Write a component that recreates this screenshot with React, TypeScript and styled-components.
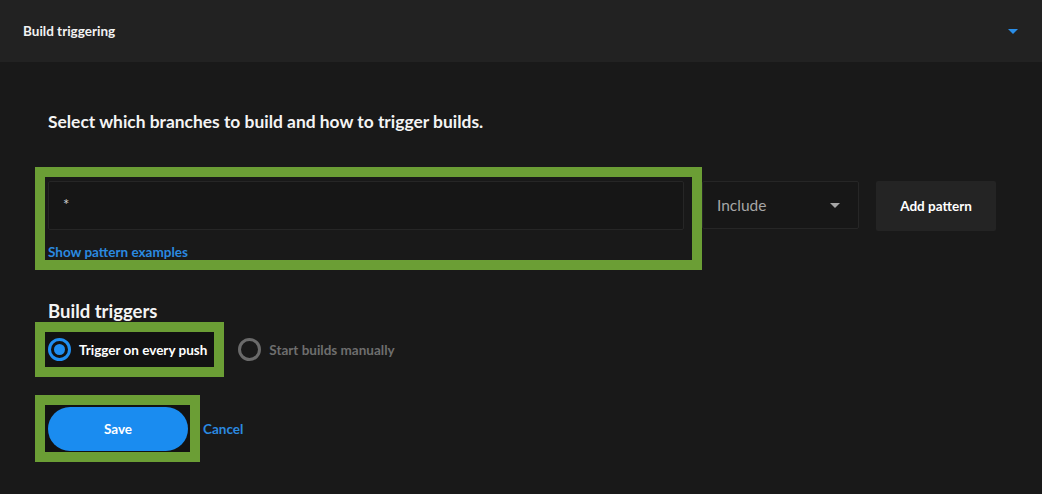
import React from "react";
import styled, { createGlobalStyle } from "styled-components";

const Global = createGlobalStyle`
  html, body { margin: 0; padding: 0; background: #191919; }
  body { font-family: Lato, "Open Sans", Arial, sans-serif; color: #fff; }
  * { box-sizing: border-box; }
`;

const Page = styled.div`
  width: 1042px;
  height: 494px;
  background: #191919;
  overflow: hidden;
`;

const Header = styled.header`
  height: 62px;
  background: #222222;
  display: flex;
  align-items: center;
  justify-content: space-between;
  padding: 0 24px 0 23px;
`;

const HeaderTitle = styled.h2`
  margin: 0;
  font-size: 13.5px;
  font-weight: 700;
  color: #f2f2f2;
`;

const Content = styled.main`
  padding: 50px 0 0 48px;
  display: flex;
  flex-direction: column;
  align-items: flex-start;
`;

const Lead = styled.p`
  margin: 0;
  font-size: 17.4px;
  line-height: 20px;
  font-weight: 700;
  color: #f4f4f4;
`;

const Highlight = styled.div`
  outline: 10px solid #6b9e35;
  margin-left: -3px;
`;

const PatternRow = styled.div`
  display: flex;
  align-items: flex-start;
  margin-top: 45px;
`;

const PatternGroup = styled(Highlight)`
  width: 647px;
  padding: 4px 8px 0 3px;
  display: flex;
  flex-direction: column;
  align-items: flex-start;
`;

const PatternInput = styled.div`
  width: 636px;
  height: 49px;
  background: #161616;
  border: 1px solid #262626;
  border-radius: 2px;
  display: flex;
  align-items: center;
  padding: 0 0 4px 14px;
  font-size: 15px;
  color: #cfcfcf;
`;

const LinkText = styled.a`
  color: #2b8ae0;
  font-size: 13.5px;
  font-weight: 700;
  text-decoration: none;
  cursor: pointer;
`;

const ExamplesLink = styled(LinkText)`
  margin-top: 14px;
  line-height: 16px;
`;

const Select = styled.div`
  margin: 4px 0 0 10px;
  width: 157px;
  height: 48px;
  background: #171717;
  border: 1px solid #262626;
  border-radius: 2px;
  display: flex;
  align-items: center;
  justify-content: space-between;
  padding: 0 18px 0 14px;
  font-size: 15.5px;
  color: #a6a6a6;
`;

const Caret = styled.span<{ $color: string; $w: number; $h: number }>`
  width: 0;
  height: 0;
  border-left: ${(p) => p.$w / 2}px solid transparent;
  border-right: ${(p) => p.$w / 2}px solid transparent;
  border-top: ${(p) => p.$h}px solid ${(p) => p.$color};
`;

const AddButton = styled.button`
  margin: 4px 0 0 17px;
  width: 120px;
  height: 50px;
  background: #242424;
  border: none;
  border-radius: 2px;
  color: #fff;
  font-family: inherit;
  font-size: 13.5px;
  font-weight: 700;
  cursor: pointer;
`;

const SubHeading = styled.h3`
  margin: 41px 0 0;
  font-size: 18.5px;
  line-height: 20px;
  font-weight: 700;
  color: #f4f4f4;
`;

const RadioRow = styled.div`
  display: flex;
  align-items: center;
  margin-top: 11px;
`;

const RadioLabel = styled.label<{ $active?: boolean }>`
  display: flex;
  align-items: center;
  gap: 8px;
  height: 35px;
  padding: 0 7px 0 3px;
  background: ${(p) => (p.$active ? "#121212" : "transparent")};
  font-size: 13.5px;
  font-weight: 700;
  color: ${(p) => (p.$active ? "#ffffff" : "#6e6e6e")};
  cursor: pointer;
`;

const ActiveRadio = styled(Highlight)`
  display: flex;
`;

const Circle = styled.span<{ $active?: boolean }>`
  width: 23px;
  height: 23px;
  border-radius: 50%;
  border: 3px solid ${(p) => (p.$active ? "#1f8ef1" : "#6a6a6a")};
  display: flex;
  align-items: center;
  justify-content: center;
  &::after {
    content: "";
    width: 11px;
    height: 11px;
    border-radius: 50%;
    background: ${(p) => (p.$active ? "#1f8ef1" : "transparent")};
  }
`;

const SecondRadio = styled.div`
  margin-left: 21px;
  display: flex;
`;

const ActionRow = styled.div`
  display: flex;
  align-items: center;
  margin-top: 38px;
`;

const SaveWrap = styled(Highlight)`
  padding: 2px 2px 1px 3px;
  background: #121212;
`;

const SaveButton = styled.button`
  width: 140px;
  height: 44px;
  border-radius: 22px;
  border: none;
  background: #1a8cf0;
  color: #fff;
  font-family: inherit;
  font-size: 13.5px;
  font-weight: 700;
  display: block;
  cursor: pointer;
`;

const CancelLink = styled(LinkText)`
  margin-left: 13px;
`;

export default function App() {
  return (
    <Page>
      <Global />
      <Header>
        <HeaderTitle>Build triggering</HeaderTitle>
        <Caret $color="#2a8ee8" $w={10} $h={5} />
      </Header>
      <Content>
        <Lead>Select which branches to build and how to trigger builds.</Lead>
        <PatternRow>
          <PatternGroup>
            <PatternInput>*</PatternInput>
            <ExamplesLink>Show pattern examples</ExamplesLink>
          </PatternGroup>
          <Select>
            <span>Include</span>
            <Caret $color="#a6a6a6" $w={10} $h={5} />
          </Select>
          <AddButton>Add pattern</AddButton>
        </PatternRow>
        <SubHeading>Build triggers</SubHeading>
        <RadioRow>
          <ActiveRadio>
            <RadioLabel $active>
              <Circle $active />
              Trigger on every push
            </RadioLabel>
          </ActiveRadio>
          <SecondRadio>
            <RadioLabel>
              <Circle />
              Start builds manually
            </RadioLabel>
          </SecondRadio>
        </RadioRow>
        <ActionRow>
          <SaveWrap>
            <SaveButton>Save</SaveButton>
          </SaveWrap>
          <CancelLink>Cancel</CancelLink>
        </ActionRow>
      </Content>
    </Page>
  );
}
